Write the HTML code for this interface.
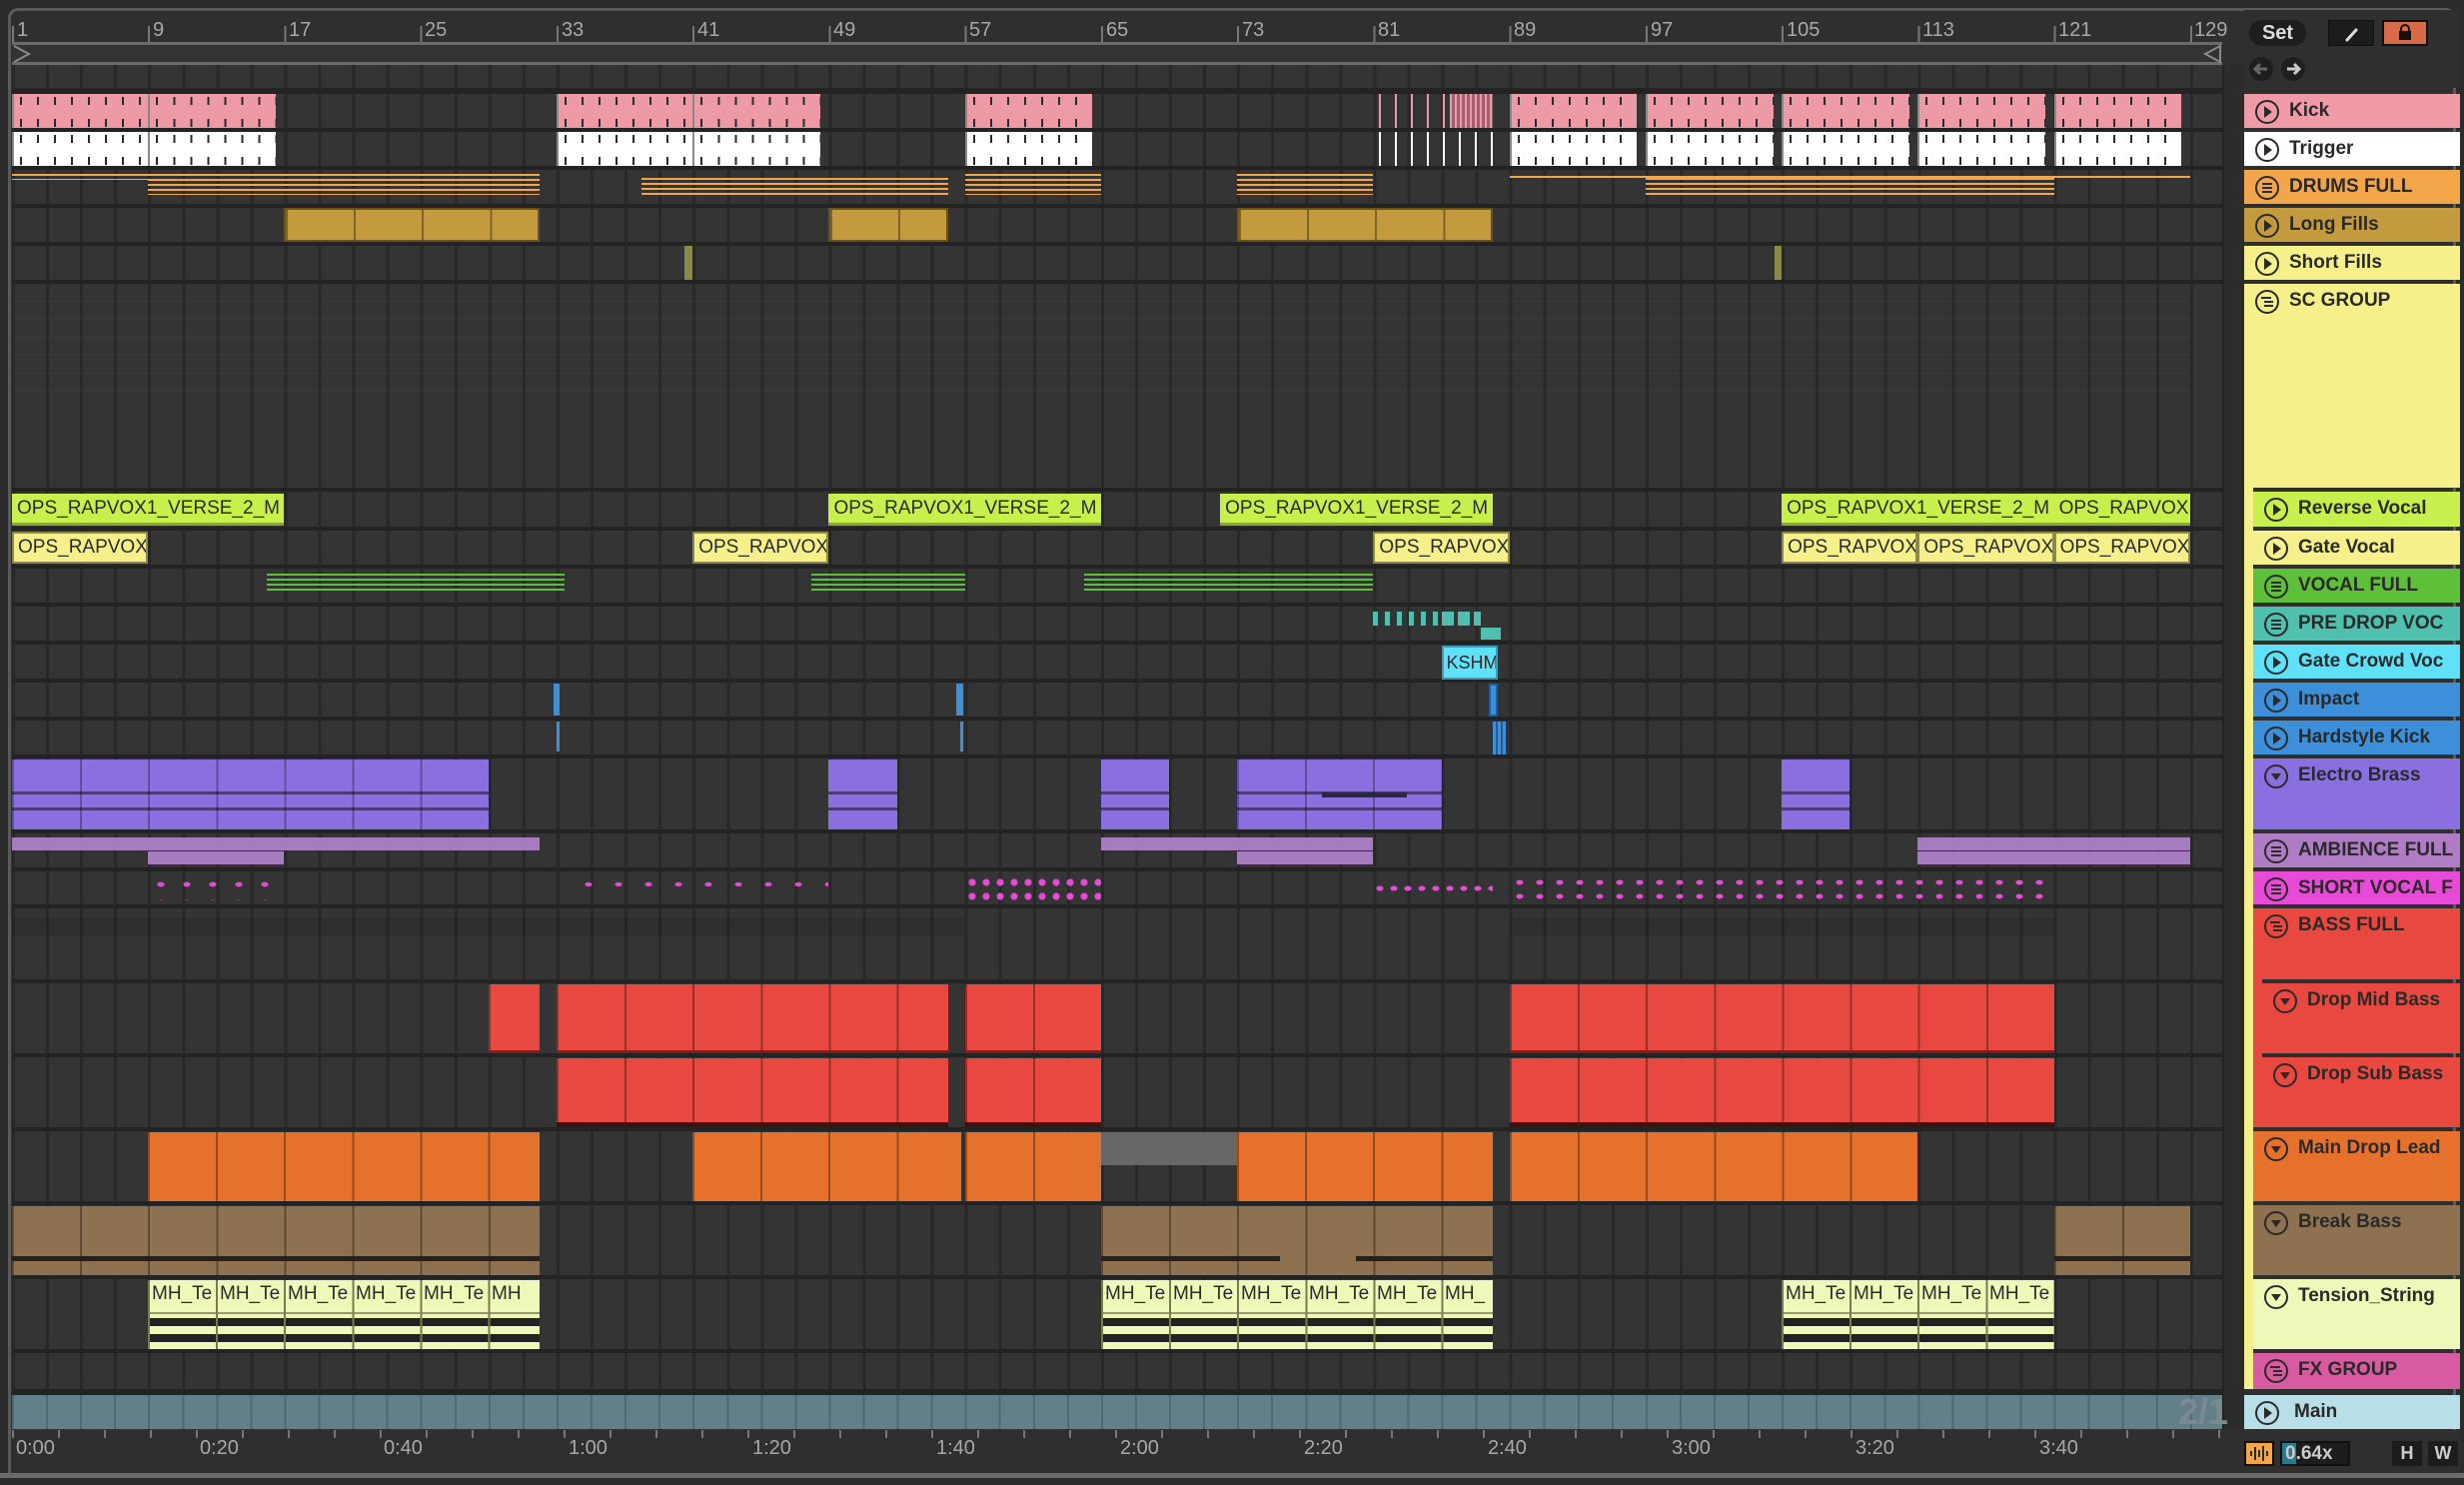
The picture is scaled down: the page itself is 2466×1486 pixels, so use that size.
<!DOCTYPE html>
<html><head><meta charset="utf-8"><style>
*{box-sizing:border-box;margin:0;padding:0}
body{width:2466px;height:1486px;background:#2b2b2b;position:relative;overflow:hidden;font-family:"Liberation Sans",sans-serif}
.abs{position:absolute}
#frame{position:absolute;left:8px;top:8px;width:2450px;height:1470px;border:3px solid #5a5a5a;border-radius:10px 10px 0 0;border-bottom:none;background:#2f2f2f}
#grid{position:absolute;left:12px;top:65px;width:2212px;height:1366px;background:#343434;
 background-image:repeating-linear-gradient(90deg,#282828 0 3px,transparent 3px 34.06px)}
.sep{position:absolute;left:12px;width:2234px;background:#232323}
.c{position:absolute;left:calc(12px + (var(--a) - 1) * 17.03px);width:calc((var(--b) - var(--a)) * 17.03px);overflow:hidden;white-space:nowrap}
.tick{background-image:repeating-linear-gradient(90deg,transparent 0 8px,#2a2a2a 8px 10px,transparent 10px 17.03px),repeating-linear-gradient(90deg,transparent 0 8px,#2a2a2a 8px 10px,transparent 10px 17.03px),repeating-linear-gradient(90deg,#888 0 2px,transparent 2px 136.24px);background-size:100% 8px,100% 8px,100% 100%;background-repeat:no-repeat;background-position:0 3px,0 calc(100% - 1px),0 0}
.seg{background-image:repeating-linear-gradient(90deg,rgba(0,0,0,.35) 0 2px,transparent 2px 68.12px)}
.lbl{font-size:19px;color:#2a2a2a;padding:4px 0 0 5px}
.hd{position:absolute;left:2246px;width:216px;color:#2a2a2a;font-weight:bold;font-size:19px;font-family:"Liberation Sans",sans-serif;white-space:nowrap;overflow:hidden}
.hd span{position:absolute;left:45px;top:6px}
.hd svg{position:absolute;left:10px;top:5px}
.rl{position:absolute;top:19px;font-size:20px;color:#a8a8a8}
.tl{position:absolute;top:1438px;font-size:20px;color:#a8a8a8}
.ten{background:#eef8b8;background-image:repeating-linear-gradient(90deg,#7a7a50 0 2px,transparent 2px 68.12px),linear-gradient(180deg,transparent 0 32px,#9a9a70 32px 34px,transparent 34px 38px,#222 38px 46px,transparent 46px 54px,#222 54px 62px,transparent 62px)}
</style></head><body>
<div id="frame"></div>
<div class="abs" style="left:12px;top:42px;width:2212px;height:3px;background:#6a6a6a"></div>
<div class="abs" style="left:12px;top:62px;width:2212px;height:3px;background:#6a6a6a"></div>
<div class="abs" style="left:12px;top:45px;width:2212px;height:17px;background:#333"></div>
<svg class="abs" style="left:12px;top:44px" width="20" height="20"><path d="M2 2 L17 10 L2 18" fill="none" stroke="#8a8a8a" stroke-width="2"/></svg>
<svg class="abs" style="left:2204px;top:44px" width="20" height="20"><path d="M18 2 L3 10 L18 18 Z" fill="none" stroke="#8a8a8a" stroke-width="2"/></svg>
<div class="abs" style="left:12px;top:26px;width:2212px;height:16px;background-image:repeating-linear-gradient(90deg,#777 0 2px,transparent 2px 136.24px)"></div>
<div class="rl" style="left:17px">1</div><div class="rl" style="left:153px">9</div><div class="rl" style="left:289px">17</div><div class="rl" style="left:425px">25</div><div class="rl" style="left:562px">33</div><div class="rl" style="left:698px">41</div><div class="rl" style="left:834px">49</div><div class="rl" style="left:970px">57</div><div class="rl" style="left:1107px">65</div><div class="rl" style="left:1243px">73</div><div class="rl" style="left:1379px">81</div><div class="rl" style="left:1515px">89</div><div class="rl" style="left:1652px">97</div><div class="rl" style="left:1788px">105</div><div class="rl" style="left:1924px">113</div><div class="rl" style="left:2060px">121</div><div class="rl" style="left:2196px">129</div>

<div id="grid"></div>
<div class="sep" style="top:88px;height:6px"></div><div class="sep" style="top:128px;height:4px"></div><div class="sep" style="top:166px;height:4px"></div><div class="sep" style="top:204px;height:4px"></div><div class="sep" style="top:242px;height:4px"></div><div class="sep" style="top:280px;height:4px"></div><div class="sep" style="top:488px;height:4px"></div><div class="sep" style="top:527px;height:4px"></div><div class="sep" style="top:565px;height:4px"></div><div class="sep" style="top:603px;height:4px"></div><div class="sep" style="top:641px;height:4px"></div><div class="sep" style="top:679px;height:4px"></div><div class="sep" style="top:717px;height:4px"></div><div class="sep" style="top:755px;height:4px"></div><div class="sep" style="top:830px;height:4px"></div><div class="sep" style="top:868px;height:4px"></div><div class="sep" style="top:905px;height:4px"></div><div class="sep" style="top:980px;height:4px"></div><div class="sep" style="top:1054px;height:4px"></div><div class="sep" style="top:1128px;height:4px"></div><div class="sep" style="top:1202px;height:4px"></div><div class="sep" style="top:1276px;height:4px"></div><div class="sep" style="top:1350px;height:4px"></div><div class="sep" style="top:1390px;height:6px"></div>
<div class="abs" style="left:2224px;top:65px;width:22px;height:1366px;background:#2c2c2c;border-left:2px solid #222"></div>

<!-- Kick -->
<div class="c tick" style="--a:1;--b:16.5;top:94px;height:34px;background-color:#ee9aa6"></div>
<div class="c tick" style="--a:33;--b:48.5;top:94px;height:34px;background-color:#ee9aa6"></div>
<div class="c tick" style="--a:57;--b:64.5;top:94px;height:34px;background-color:#ee9aa6"></div>
<div class="c" style="--a:81;--b:88;top:94px;height:34px;background:repeating-linear-gradient(90deg,transparent 0 6px,#ee9aa6 6px 8px,transparent 8px 16px)"></div>
<div class="c" style="--a:85.5;--b:88;top:94px;height:34px;background:repeating-linear-gradient(90deg,#ee9aa6 0 2px,#a06070 2px 5px)"></div>
<div class="c tick" style="--a:89;--b:96.5;top:94px;height:34px;background-color:#ee9aa6"></div>
<div class="c tick" style="--a:97;--b:104.5;top:94px;height:34px;background-color:#ee9aa6"></div>
<div class="c tick" style="--a:105;--b:112.5;top:94px;height:34px;background-color:#ee9aa6"></div>
<div class="c tick" style="--a:113;--b:120.5;top:94px;height:34px;background-color:#ee9aa6"></div>
<div class="c tick" style="--a:121;--b:128.5;top:94px;height:34px;background-color:#ee9aa6"></div>
<!-- Trigger -->
<div class="c tick" style="--a:1;--b:16.5;top:132px;height:34px;background-color:#fff"></div>
<div class="c tick" style="--a:33;--b:48.5;top:132px;height:34px;background-color:#fff"></div>
<div class="c tick" style="--a:57;--b:64.5;top:132px;height:34px;background-color:#fff"></div>
<div class="c" style="--a:81;--b:88;top:132px;height:34px;background:repeating-linear-gradient(90deg,transparent 0 6px,#fff 6px 8px,transparent 8px 16px)"></div>
<div class="c tick" style="--a:89;--b:96.5;top:132px;height:34px;background-color:#fff"></div>
<div class="c tick" style="--a:97;--b:104.5;top:132px;height:34px;background-color:#fff"></div>
<div class="c tick" style="--a:105;--b:112.5;top:132px;height:34px;background-color:#fff"></div>
<div class="c tick" style="--a:113;--b:120.5;top:132px;height:34px;background-color:#fff"></div>
<div class="c tick" style="--a:121;--b:128.5;top:132px;height:34px;background-color:#fff"></div>
<!-- Drums -->
<div class="c" style="--a:1;--b:9;top:174px;height:6px;background:repeating-linear-gradient(180deg,#f2a649 0 2px,transparent 2px 5px)"></div>
<div class="c" style="--a:9;--b:32;top:174px;height:21px;background:repeating-linear-gradient(180deg,#f2a649 0 2px,transparent 2px 5px)"></div>
<div class="c" style="--a:38;--b:56;top:178px;height:17px;background:repeating-linear-gradient(180deg,#f2a649 0 2px,transparent 2px 5px)"></div>
<div class="c" style="--a:57;--b:65;top:174px;height:21px;background:repeating-linear-gradient(180deg,#f2a649 0 2px,transparent 2px 5px)"></div>
<div class="c" style="--a:73;--b:81;top:174px;height:21px;background:repeating-linear-gradient(180deg,#f2a649 0 2px,transparent 2px 5px)"></div>
<div class="c" style="--a:89;--b:129;top:176px;height:4px;background:repeating-linear-gradient(180deg,#f2a649 0 2px,transparent 2px 5px)"></div>
<div class="c" style="--a:97;--b:121;top:178px;height:17px;background:repeating-linear-gradient(180deg,#f2a649 0 2px,transparent 2px 5px)"></div>
<!-- Long fills -->
<div class="c seg" style="--a:17;--b:32;top:208px;height:34px;background-color:#c39a3e;border:2px solid #6a5220"></div>
<div class="c seg" style="--a:49;--b:56;top:208px;height:34px;background-color:#c39a3e;border:2px solid #6a5220"></div>
<div class="c seg" style="--a:73;--b:88;top:208px;height:34px;background-color:#c39a3e;border:2px solid #6a5220"></div>
<div class="c" style="--a:40.5;--b:41;top:246px;height:34px;background:#8a8a4c"></div>
<div class="c" style="--a:104.6;--b:105;top:246px;height:34px;background:#8a8a4c"></div>
<div class="c" style="--a:1;--b:129;top:300px;height:100px;background:repeating-linear-gradient(180deg,rgba(255,255,255,.02) 0 2px,transparent 2px 18px)"></div>
<!-- Reverse vocal -->
<div class="c lbl" style="--a:1;--b:17;top:494px;height:32px;background:#c8f04c;border-bottom:3px solid #8aa838">OPS_RAPVOX1_VERSE_2_M</div>
<div class="c lbl" style="--a:49;--b:65;top:494px;height:32px;background:#c8f04c;border-bottom:3px solid #8aa838">OPS_RAPVOX1_VERSE_2_M</div>
<div class="c lbl" style="--a:72;--b:88;top:494px;height:32px;background:#c8f04c;border-bottom:3px solid #8aa838">OPS_RAPVOX1_VERSE_2_M</div>
<div class="c lbl" style="--a:105;--b:121;top:494px;height:32px;background:#c8f04c;border-bottom:3px solid #8aa838">OPS_RAPVOX1_VERSE_2_M</div>
<div class="c lbl" style="--a:121;--b:129;top:494px;height:32px;background:#c8f04c;border-bottom:3px solid #8aa838">OPS_RAPVOX</div>
<!-- Gate vocal -->
<div class="c lbl" style="--a:1;--b:9;top:532px;height:32px;background:#f5f08a;border:2px solid #8a8a4a;padding:3px 0 0 4px">OPS_RAPVOX</div>
<div class="c lbl" style="--a:41;--b:49;top:532px;height:32px;background:#f5f08a;border:2px solid #8a8a4a;padding:3px 0 0 4px">OPS_RAPVOX</div>
<div class="c lbl" style="--a:81;--b:89;top:532px;height:32px;background:#f5f08a;border:2px solid #8a8a4a;padding:3px 0 0 4px">OPS_RAPVOX</div>
<div class="c lbl" style="--a:105;--b:113;top:532px;height:32px;background:#f5f08a;border:2px solid #8a8a4a;padding:3px 0 0 4px">OPS_RAPVOX</div>
<div class="c lbl" style="--a:113;--b:121;top:532px;height:32px;background:#f5f08a;border:2px solid #8a8a4a;padding:3px 0 0 4px">OPS_RAPVOX</div>
<div class="c lbl" style="--a:121;--b:129;top:532px;height:32px;background:#f5f08a;border:2px solid #8a8a4a;padding:3px 0 0 4px">OPS_RAPVOX</div>
<!-- Vocal full -->
<div class="c" style="--a:16;--b:33.5;top:574px;height:18px;background:repeating-linear-gradient(180deg,#5ec038 0 2px,transparent 2px 5px)"></div>
<div class="c" style="--a:48;--b:57;top:574px;height:18px;background:repeating-linear-gradient(180deg,#5ec038 0 2px,transparent 2px 5px)"></div>
<div class="c" style="--a:64;--b:81;top:574px;height:18px;background:repeating-linear-gradient(180deg,#5ec038 0 2px,transparent 2px 5px)"></div>
<!-- Pre drop -->
<div class="c" style="--a:81;--b:85.5;top:612px;height:14px;background:repeating-linear-gradient(90deg,#4fbfae 0 5px,transparent 5px 12px)"></div>
<div class="c" style="--a:85;--b:87.3;top:612px;height:14px;background:repeating-linear-gradient(90deg,#4fbfae 0 12px,transparent 12px 16px)"></div>
<div class="c" style="--a:87.3;--b:88.5;top:628px;height:12px;background:#4fbfae"></div>
<!-- Gate crowd -->
<div class="c lbl" style="--a:85;--b:88.3;top:646px;height:34px;background:#5fe2f8;border:2px solid #3d9ab8;padding:5px 0 0 3px;font-size:18px">KSHM</div>
<!-- Impact / hardstyle -->
<div class="c" style="--a:32.8;--b:33.2;top:684px;height:32px;background:#3c8fd8"></div>
<div class="c" style="--a:56.5;--b:56.9;top:684px;height:32px;background:#3c8fd8"></div>
<div class="c" style="--a:87.8;--b:88.3;top:684px;height:33px;background:#3c8fd8;border:2px solid #2a5a90"></div>
<div class="c" style="--a:33;--b:33.2;top:722px;height:30px;background:#3c8fd8"></div>
<div class="c" style="--a:56.7;--b:56.9;top:722px;height:30px;background:#3c8fd8"></div>
<div class="c" style="--a:88;--b:88.8;top:722px;height:33px;background:repeating-linear-gradient(90deg,#3c8fd8 0 3px,#2a5a90 3px 5px)"></div>
<!-- Electro brass -->
<div class="c" style="--a:1;--b:29;top:760px;height:70px;background:#8a6fe0;background-image:repeating-linear-gradient(90deg,rgba(0,0,0,.3) 0 2px,transparent 2px 68.12px),linear-gradient(180deg,transparent 0 32px,#4a3a7a 32px 35px,transparent 35px 48px,#4a3a7a 48px 51px,transparent 51px)"></div>
<div class="c" style="--a:49;--b:53;top:760px;height:70px;background:#8a6fe0;background-image:linear-gradient(180deg,transparent 0 32px,#4a3a7a 32px 35px,transparent 35px 48px,#4a3a7a 48px 51px,transparent 51px)"></div>
<div class="c" style="--a:65;--b:69;top:760px;height:70px;background:#8a6fe0;background-image:linear-gradient(180deg,transparent 0 32px,#4a3a7a 32px 35px,transparent 35px 48px,#4a3a7a 48px 51px,transparent 51px)"></div>
<div class="c" style="--a:73;--b:85;top:760px;height:70px;background:#8a6fe0;background-image:repeating-linear-gradient(90deg,rgba(0,0,0,.3) 0 2px,transparent 2px 68.12px),linear-gradient(180deg,transparent 0 32px,#4a3a7a 32px 35px,transparent 35px 48px,#4a3a7a 48px 51px,transparent 51px)"></div>
<div class="c" style="--a:78;--b:83;top:793px;height:5px;background:#2a2a3a"></div>
<div class="c" style="--a:105;--b:109;top:760px;height:70px;background:#8a6fe0;background-image:linear-gradient(180deg,transparent 0 32px,#4a3a7a 32px 35px,transparent 35px 48px,#4a3a7a 48px 51px,transparent 51px)"></div>
<!-- Ambience -->
<div class="c" style="--a:1;--b:32;top:838px;height:13px;background:#a77cbe"></div>
<div class="c" style="--a:9;--b:17;top:852px;height:13px;background:#a77cbe"></div>
<div class="c" style="--a:65;--b:81;top:838px;height:13px;background:#a77cbe"></div>
<div class="c" style="--a:73;--b:81;top:852px;height:13px;background:#a77cbe"></div>
<div class="c" style="--a:113;--b:129;top:838px;height:13px;background:#a77cbe"></div>
<div class="c" style="--a:113;--b:129;top:852px;height:13px;background:#a77cbe"></div>
<!-- Short vocal dots -->
<div class="c" style="--a:9;--b:17;top:876px;height:25px;background:radial-gradient(#e84ad8 0 3px,transparent 4px) 0 0/26px 18px"></div>
<div class="c" style="--a:34;--b:49;top:876px;height:25px;background:radial-gradient(#e84ad8 0 3px,transparent 4px) 0 0/30px 18px"></div>
<div class="c" style="--a:57;--b:65;top:876px;height:25px;background:radial-gradient(#e84ad8 0 3px,transparent 4px) 0 0/14px 14px"></div>
<div class="c" style="--a:81;--b:88;top:884px;height:10px;background:radial-gradient(#e84ad8 0 3px,transparent 4px) 0 0/14px 10px"></div>
<div class="c" style="--a:89;--b:121;top:876px;height:25px;background:radial-gradient(#e84ad8 0 3px,transparent 4px) 0 0/20px 14px"></div>
<div class="c" style="--a:1;--b:57;top:918px;height:18px;background:rgba(0,0,0,.08)"></div>
<div class="c" style="--a:89;--b:121;top:918px;height:18px;background:rgba(0,0,0,.08)"></div>
<!-- Drop mid / sub -->
<div class="c seg" style="--a:29;--b:32;top:985px;height:69px;background-color:#e8483f;border-bottom:3px solid #7a2020"></div>
<div class="c seg" style="--a:33;--b:56;top:985px;height:69px;background-color:#e8483f;border-bottom:3px solid #7a2020"></div>
<div class="c seg" style="--a:57;--b:65;top:985px;height:69px;background-color:#e8483f;border-bottom:3px solid #7a2020"></div>
<div class="c seg" style="--a:89;--b:121;top:985px;height:69px;background-color:#e8483f;border-bottom:3px solid #7a2020"></div>
<div class="c seg" style="--a:33;--b:56;top:1059px;height:69px;background-color:#e8483f;border-bottom:5px solid #3a1414"></div>
<div class="c seg" style="--a:57;--b:65;top:1059px;height:69px;background-color:#e8483f;border-bottom:5px solid #3a1414"></div>
<div class="c seg" style="--a:89;--b:121;top:1059px;height:69px;background-color:#e8483f;border-bottom:5px solid #3a1414"></div>
<!-- Main drop lead -->
<div class="c seg" style="--a:9;--b:32;top:1133px;height:69px;background-color:#e6712c"></div>
<div class="c seg" style="--a:41;--b:56.8;top:1133px;height:69px;background-color:#e6712c"></div>
<div class="c seg" style="--a:57;--b:65;top:1133px;height:69px;background-color:#e6712c"></div>
<div class="c" style="--a:65;--b:73;top:1133px;height:33px;background:#676767"></div>
<div class="c seg" style="--a:73;--b:88;top:1133px;height:69px;background-color:#e6712c"></div>
<div class="c seg" style="--a:89;--b:113;top:1133px;height:69px;background-color:#e6712c"></div>
<!-- Break bass -->
<div class="c seg" style="--a:1;--b:32;top:1207px;height:69px;background-color:#8e7150"></div>
<div class="c seg" style="--a:65;--b:88;top:1207px;height:69px;background-color:#8e7150"></div>
<div class="c seg" style="--a:121;--b:129;top:1207px;height:69px;background-color:#8e7150"></div>
<div class="c" style="--a:1;--b:32;top:1257px;height:5px;background:#222"></div>
<div class="c" style="--a:65;--b:75.5;top:1257px;height:5px;background:#222"></div>
<div class="c" style="--a:80;--b:88;top:1257px;height:5px;background:#222"></div>
<div class="c" style="--a:121;--b:129;top:1257px;height:5px;background:#222"></div>
<!-- Tension -->
<div class="c ten" style="--a:9;--b:32;top:1281px;height:69px"></div>
<div class="c ten" style="--a:65;--b:88;top:1281px;height:69px"></div>
<div class="c ten" style="--a:105;--b:121;top:1281px;height:69px"></div>
<div class="abs" style="top:1284px;left:152px;font-size:19px;color:#2a2a2a;white-space:nowrap">
<span style="position:absolute;left:0">MH_Te</span><span style="position:absolute;left:68px">MH_Te</span><span style="position:absolute;left:136px">MH_Te</span><span style="position:absolute;left:204px">MH_Te</span><span style="position:absolute;left:272px">MH_Te</span><span style="position:absolute;left:340px">MH</span></div>
<div class="abs" style="top:1284px;left:1106px;font-size:19px;color:#2a2a2a;white-space:nowrap">
<span style="position:absolute;left:0">MH_Te</span><span style="position:absolute;left:68px">MH_Te</span><span style="position:absolute;left:136px">MH_Te</span><span style="position:absolute;left:204px">MH_Te</span><span style="position:absolute;left:272px">MH_Te</span><span style="position:absolute;left:340px">MH_</span></div>
<div class="abs" style="top:1284px;left:1787px;font-size:19px;color:#2a2a2a;white-space:nowrap">
<span style="position:absolute;left:0">MH_Te</span><span style="position:absolute;left:68px">MH_Te</span><span style="position:absolute;left:136px">MH_Te</span><span style="position:absolute;left:204px">MH_Te</span></div>
<!-- Main -->
<div class="abs" style="left:12px;top:1396px;width:2212px;height:34px;background:#62808a;background-image:repeating-linear-gradient(90deg,#4e6a74 0 2px,transparent 2px 34.06px)"></div>
<div class="abs" style="left:2180px;top:1392px;font-size:36px;font-weight:bold;color:#7a8a90">2/1</div>
<div class="abs" style="left:12px;top:1431px;width:2212px;height:8px;background-image:repeating-linear-gradient(90deg,#777 0 2px,transparent 2px 46px)"></div>
<div class="tl" style="left:16px">0:00</div><div class="tl" style="left:200px">0:20</div><div class="tl" style="left:384px">0:40</div><div class="tl" style="left:569px">1:00</div><div class="tl" style="left:753px">1:20</div><div class="tl" style="left:937px">1:40</div><div class="tl" style="left:1121px">2:00</div><div class="tl" style="left:1305px">2:20</div><div class="tl" style="left:1489px">2:40</div><div class="tl" style="left:1673px">3:00</div><div class="tl" style="left:1857px">3:20</div><div class="tl" style="left:2041px">3:40</div>
<div class="abs" style="left:0;top:1474px;width:2466px;height:5px;background:#6a6a6a"></div>

<!-- Top-right controls -->
<div class="abs" style="left:2246px;top:10px;width:216px;height:78px;background:#2f2f2f"></div>
<div class="abs" style="left:2251px;top:20px;width:57px;height:26px;border-radius:13px;background:#1e1e1e;color:#ddd;font-size:20px;font-weight:bold;text-align:center;line-height:26px">Set</div>
<div class="abs" style="left:2330px;top:20px;width:46px;height:26px;background:#1c1c1c;border:1px solid #111"><svg width="46" height="26"><path d="M18 19 L27 9" stroke="#ddd" stroke-width="3" stroke-linecap="round"/></svg></div>
<div class="abs" style="left:2384px;top:20px;width:46px;height:26px;background:#d86a48;border:2px solid #111"><svg width="42" height="22"><rect x="15" y="9" width="12" height="9" fill="#111"/><path d="M17 10 V7 a4 4 0 0 1 8 0 V10" stroke="#111" stroke-width="2" fill="none"/></svg></div>
<svg class="abs" style="left:2250px;top:56px" width="60" height="27"><circle cx="13" cy="13" r="12" fill="#1e1e1e"/><path d="M19 13 H8 M12 8 L7 13 L12 18" stroke="#666" stroke-width="3" fill="none"/><circle cx="45" cy="13" r="12" fill="#1e1e1e"/><path d="M39 13 H50 M46 8 L51 13 L46 18" stroke="#ccc" stroke-width="3" fill="none"/></svg>

<!-- Headers -->
<div class="abs" style="left:2246px;top:284px;width:9px;height:1106px;background:#f5f08a"></div>
<div class="abs" style="left:2255px;top:909px;width:9px;height:219px;background:#e8483f"></div>

<div class="hd" style="top:94px;height:34px;background:#f09aa8"><svg width="26" height="26"><circle cx="13" cy="13" r="11" fill="none" stroke="#2a2a2a" stroke-width="2"/><path d="M10 7 L18 13 L10 19Z" fill="#2a2a2a"/></svg><span>Kick</span></div>
<div class="hd" style="top:132px;height:34px;background:#fff"><svg width="26" height="26"><circle cx="13" cy="13" r="11" fill="none" stroke="#2a2a2a" stroke-width="2"/><path d="M10 7 L18 13 L10 19Z" fill="#2a2a2a"/></svg><span>Trigger</span></div>
<div class="hd" style="top:170px;height:34px;background:#f2a649"><svg width="26" height="26"><circle cx="13" cy="13" r="11" fill="none" stroke="#2a2a2a" stroke-width="2"/><path d="M8 9 H18 M8 13 H18 M8 17 H18" stroke="#2a2a2a" stroke-width="2"/></svg><span>DRUMS FULL</span></div>
<div class="hd" style="top:208px;height:34px;background:#c39a3e"><svg width="26" height="26"><circle cx="13" cy="13" r="11" fill="none" stroke="#2a2a2a" stroke-width="2"/><path d="M10 7 L18 13 L10 19Z" fill="#2a2a2a"/></svg><span>Long Fills</span></div>
<div class="hd" style="top:246px;height:34px;background:#f5f08a"><svg width="26" height="26"><circle cx="13" cy="13" r="11" fill="none" stroke="#2a2a2a" stroke-width="2"/><path d="M10 7 L18 13 L10 19Z" fill="#2a2a2a"/></svg><span>Short Fills</span></div>
<div class="hd" style="top:284px;height:204px;background:#f5f08a"><svg width="26" height="26"><circle cx="13" cy="13" r="11" fill="none" stroke="#2a2a2a" stroke-width="2"/><path d="M7 9 H17 M10 13 H19 M10 17 H19" stroke="#2a2a2a" stroke-width="2"/></svg><span>SC GROUP</span></div>

<div class="hd" style="left:2255px;width:207px;top:492px;height:35px;background:#c8f04c"><svg width="26" height="26"><circle cx="13" cy="13" r="11" fill="none" stroke="#2a2a2a" stroke-width="2"/><path d="M10 7 L18 13 L10 19Z" fill="#2a2a2a"/></svg><span>Reverse Vocal</span></div>
<div class="hd" style="left:2255px;width:207px;top:531px;height:34px;background:#f5f08a"><svg width="26" height="26"><circle cx="13" cy="13" r="11" fill="none" stroke="#2a2a2a" stroke-width="2"/><path d="M10 7 L18 13 L10 19Z" fill="#2a2a2a"/></svg><span>Gate Vocal</span></div>
<div class="hd" style="left:2255px;width:207px;top:569px;height:34px;background:#5ec038"><svg width="26" height="26"><circle cx="13" cy="13" r="11" fill="none" stroke="#2a2a2a" stroke-width="2"/><path d="M8 9 H18 M8 13 H18 M8 17 H18" stroke="#2a2a2a" stroke-width="2"/></svg><span>VOCAL FULL</span></div>
<div class="hd" style="left:2255px;width:207px;top:607px;height:34px;background:#4fbfae"><svg width="26" height="26"><circle cx="13" cy="13" r="11" fill="none" stroke="#2a2a2a" stroke-width="2"/><path d="M8 9 H18 M8 13 H18 M8 17 H18" stroke="#2a2a2a" stroke-width="2"/></svg><span>PRE DROP VOC</span></div>
<div class="hd" style="left:2255px;width:207px;top:645px;height:34px;background:#5fe2f8"><svg width="26" height="26"><circle cx="13" cy="13" r="11" fill="none" stroke="#2a2a2a" stroke-width="2"/><path d="M10 7 L18 13 L10 19Z" fill="#2a2a2a"/></svg><span>Gate Crowd Voc</span></div>
<div class="hd" style="left:2255px;width:207px;top:683px;height:34px;background:#3c8fd8"><svg width="26" height="26"><circle cx="13" cy="13" r="11" fill="none" stroke="#2a2a2a" stroke-width="2"/><path d="M10 7 L18 13 L10 19Z" fill="#2a2a2a"/></svg><span>Impact</span></div>
<div class="hd" style="left:2255px;width:207px;top:721px;height:34px;background:#3c8fd8"><svg width="26" height="26"><circle cx="13" cy="13" r="11" fill="none" stroke="#2a2a2a" stroke-width="2"/><path d="M10 7 L18 13 L10 19Z" fill="#2a2a2a"/></svg><span>Hardstyle Kick</span></div>
<div class="hd" style="left:2255px;width:207px;top:759px;height:71px;background:#8a6fe0"><svg width="26" height="26"><circle cx="13" cy="13" r="11" fill="none" stroke="#2a2a2a" stroke-width="2"/><path d="M8 10 L18 10 L13 17Z" fill="#2a2a2a"/></svg><span>Electro Brass</span></div>
<div class="hd" style="left:2255px;width:207px;top:834px;height:34px;background:#b07cc6"><svg width="26" height="26"><circle cx="13" cy="13" r="11" fill="none" stroke="#2a2a2a" stroke-width="2"/><path d="M8 9 H18 M8 13 H18 M8 17 H18" stroke="#2a2a2a" stroke-width="2"/></svg><span>AMBIENCE FULL</span></div>
<div class="hd" style="left:2255px;width:207px;top:872px;height:33px;background:#e84ad8"><svg width="26" height="26"><circle cx="13" cy="13" r="11" fill="none" stroke="#2a2a2a" stroke-width="2"/><path d="M8 9 H18 M8 13 H18 M8 17 H18" stroke="#2a2a2a" stroke-width="2"/></svg><span>SHORT VOCAL F</span></div>
<div class="hd" style="left:2255px;width:207px;top:909px;height:71px;background:#e8483f"><svg width="26" height="26"><circle cx="13" cy="13" r="11" fill="none" stroke="#2a2a2a" stroke-width="2"/><path d="M7 9 H17 M10 13 H19 M10 17 H19" stroke="#2a2a2a" stroke-width="2"/></svg><span>BASS FULL</span></div>
<div class="hd" style="left:2264px;width:198px;top:984px;height:70px;background:#e8483f"><svg width="26" height="26"><circle cx="13" cy="13" r="11" fill="none" stroke="#2a2a2a" stroke-width="2"/><path d="M8 10 L18 10 L13 17Z" fill="#2a2a2a"/></svg><span>Drop Mid Bass</span></div>
<div class="hd" style="left:2264px;width:198px;top:1058px;height:70px;background:#e8483f"><svg width="26" height="26"><circle cx="13" cy="13" r="11" fill="none" stroke="#2a2a2a" stroke-width="2"/><path d="M8 10 L18 10 L13 17Z" fill="#2a2a2a"/></svg><span>Drop Sub Bass</span></div>
<div class="hd" style="left:2255px;width:207px;top:1132px;height:70px;background:#e6712c"><svg width="26" height="26"><circle cx="13" cy="13" r="11" fill="none" stroke="#2a2a2a" stroke-width="2"/><path d="M8 10 L18 10 L13 17Z" fill="#2a2a2a"/></svg><span>Main Drop Lead</span></div>
<div class="hd" style="left:2255px;width:207px;top:1206px;height:70px;background:#8e7150"><svg width="26" height="26"><circle cx="13" cy="13" r="11" fill="none" stroke="#2a2a2a" stroke-width="2"/><path d="M8 10 L18 10 L13 17Z" fill="#2a2a2a"/></svg><span>Break Bass</span></div>
<div class="hd" style="left:2255px;width:207px;top:1280px;height:70px;background:#eef8b8"><svg width="26" height="26"><circle cx="13" cy="13" r="11" fill="none" stroke="#2a2a2a" stroke-width="2"/><path d="M8 10 L18 10 L13 17Z" fill="#2a2a2a"/></svg><span>Tension_String</span></div>
<div class="hd" style="left:2255px;width:207px;top:1354px;height:36px;background:#d85aa0"><svg width="26" height="26"><circle cx="13" cy="13" r="11" fill="none" stroke="#2a2a2a" stroke-width="2"/><path d="M7 9 H17 M10 13 H19 M10 17 H19" stroke="#2a2a2a" stroke-width="2"/></svg><span>FX GROUP</span></div>
<div class="hd" style="top:1396px;height:34px;background:#b8dfe8"><svg width="26" height="26"><circle cx="13" cy="13" r="11" fill="none" stroke="#2a2a2a" stroke-width="2"/><path d="M10 7 L18 13 L10 19Z" fill="#2a2a2a"/></svg><span style="left:50px">Main</span></div>

<div class="abs" style="left:2246px;top:1431px;width:216px;height:43px;background:#2f2f2f"></div>
<div class="abs" style="left:2246px;top:1442px;width:30px;height:25px;background:#f2a649;border:2px solid #111"><svg width="26" height="21"><path d="M5 8V13 M9 4V17 M13 7V14 M17 3V18 M21 8V13" stroke="#2a2a2a" stroke-width="2"/></svg></div>
<div class="abs" style="left:2282px;top:1442px;width:70px;height:25px;background:#1c1c1c;border:2px solid #111;color:#ccc;font-size:19px;font-weight:bold;line-height:21px"><span style="display:inline-block;background:#2a7a8a;padding-left:3px">0</span>.64x</div>
<div class="abs" style="left:2394px;top:1442px;width:30px;height:25px;background:#1c1c1c;color:#ccc;font-size:18px;font-weight:bold;text-align:center;line-height:25px">H</div>
<div class="abs" style="left:2430px;top:1442px;width:30px;height:25px;background:#1c1c1c;color:#ccc;font-size:18px;font-weight:bold;text-align:center;line-height:25px">W</div>
</body></html>
